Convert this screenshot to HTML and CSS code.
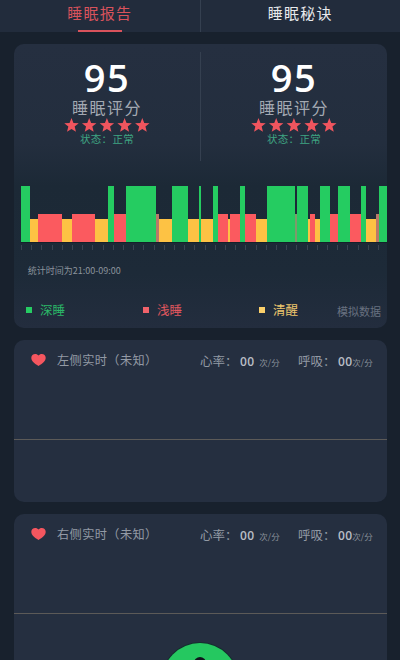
FILE: index.html
```html
<!DOCTYPE html>
<html lang="zh">
<head>
<meta charset="utf-8">
<title>睡眠报告</title>
<link rel="stylesheet" href="styles.css">
</head>
<body>
<div class="screen">
  <svg class="defs" width="0" height="0" aria-hidden="true"><defs>
    <polygon id="star" points="7.5,0 9.44,4.93 14.73,5.25 10.64,8.62 11.97,13.75 7.5,10.9 3.03,13.75 4.36,8.62 .27,5.25 5.56,4.93"/>
    <path id="heart" d="M12 20C5.500 15.800 0 12.500 0 6.300 0 2.700 2.900 0 6.500 0 8.800 0 10.800 1 12 2.700 13.200 1 15.200 0 17.500 0 21.100 0 24 2.700 24 6.300 24 12.500 18.500 15.800 12 20Z"/>
  </defs></svg>
  <nav class="tabs">
    <div class="tab active"><span>睡眠报告</span><i class="underline"></i></div>
    <div class="tab"><span>睡眠秘诀</span></div>
  </nav>
  <main class="content">
    <section class="card report">
      <div class="scores">
        <div class="score">
          <div class="num">95</div>
          <div class="lbl">睡眠评分</div>
          <svg class="stars" viewBox="0 0 86 14"><use href="#star"/><use href="#star" x="17.7"/><use href="#star" x="35.400"/><use href="#star" x="53.100"/><use href="#star" x="70.800"/></svg>
          <div class="state">状态：正常</div>
        </div>
        <div class="score">
          <div class="num">95</div>
          <div class="lbl">睡眠评分</div>
          <svg class="stars" viewBox="0 0 86 14"><use href="#star"/><use href="#star" x="17.7"/><use href="#star" x="35.400"/><use href="#star" x="53.100"/><use href="#star" x="70.800"/></svg>
          <div class="state">状态：正常</div>
        </div>
      </div>
      <div class="chart">
        <div class="bars">
          <b class="d" style="width:9.8px"></b><b class="a" style="width:8px"></b><b class="l" style="width:23.5px"></b><b class="a" style="width:10.5px"></b><b class="l" style="width:22.5px"></b><b class="a" style="width:13px"></b><b class="d" style="width:6.5px"></b><b class="l" style="width:11.5px"></b><b class="d" style="width:30px"></b><b class="mr" style="width:3px"></b><b class="a" style="width:13px"></b><b class="d" style="width:16px"></b><b class="a" style="width:11px"></b><b class="d" style="width:2px"></b><b class="a" style="width:12px"></b><b class="d" style="width:5.5px"></b><b class="l" style="width:9.5px"></b><b class="a" style="width:2px"></b><b class="l" style="width:10px"></b><b class="d" style="width:5px"></b><b class="l" style="width:11px"></b><b class="a" style="width:10.7px"></b><b class="d" style="width:28.8px"></b><b class="mg" style="width:1.5px"></b><b class="d" style="width:11px"></b><b class="a" style="width:2px"></b><b class="l" style="width:5px"></b><b class="a" style="width:5px"></b><b class="d" style="width:10px"></b><b class="l" style="width:8px"></b><b class="d" style="width:12px"></b><b class="l" style="width:11px"></b><b class="d" style="width:5px"></b><b class="a" style="width:10.5px"></b><b class="mr" style="width:3px"></b><b class="d" style="width:7.500px"></b>
        </div>
        <div class="ticks"></div>
        <div class="range">统计时间为21:00-09:00</div>
      </div>
      <div class="legend">
        <div class="lg deep"><i></i>深睡</div>
        <div class="lg light"><i></i>浅睡</div>
        <div class="lg awake"><i></i>清醒</div>
        <div class="mock">模拟数据</div>
      </div>
    </section>

    <section class="card live">
      <header class="live-head">
        <svg class="heart" viewBox="0 0 24 20"><use href="#heart"/></svg>
        <span class="side">左侧实时（未知）</span>
        <span class="metric"><span class="mlabel">心率：</span><em>00</em><small>次/分</small></span>
        <span class="metric second"><span class="mlabel">呼吸：</span><em>00</em><small>次/分</small></span>
      </header>
      <div class="axis"></div>
    </section>

    <section class="card live">
      <header class="live-head">
        <svg class="heart" viewBox="0 0 24 20"><use href="#heart"/></svg>
        <span class="side">右侧实时（未知）</span>
        <span class="metric"><span class="mlabel">心率：</span><em>00</em><small>次/分</small></span>
        <span class="metric second"><span class="mlabel">呼吸：</span><em>00</em><small>次/分</small></span>
      </header>
      <div class="axis"></div>
    </section>
  </main>
  <button class="fab" aria-label="开始"><i></i></button>
</div>
</body>
</html>
```
FILE: styles.css
```css
* { box-sizing: border-box; }
html, body { margin: 0; height: 100%; }
body { background: #18212d; font-family: "Noto Sans CJK SC", "Noto Sans", sans-serif; overflow: hidden; }
.defs { position: absolute; }
.screen { position: relative; width: 400px; height: 660px; overflow: hidden; background: #18212d; }
.tabs { display: flex; height: 32px; background: #222c3c; }
.tab { position: relative; flex: 1; display: flex; justify-content: center; padding-top: 1px; font-size: 15px; letter-spacing: 1.2px; line-height: 24px; color: #e8eaec; }
.tab + .tab { border-left: 1px solid #354050; }
.tab.active { color: #d9535c; }
.underline { position: absolute; left: 78px; bottom: 0; width: 44px; height: 2px; background: #d9535c; }
.content { display: flex; flex-direction: column; gap: 12px; padding: 12px 13px 0 14px; }
.card { border-radius: 10px; background: #252f40; }
.report { height: 284px; overflow: hidden; background: linear-gradient(#252f40 0, #232e3e 100px, #1c2936 142px, #1d2a38 230px, #232d3e 284px); }
.scores { display: flex; height: 117px; padding-top: 8px; }
.score { flex: 1; display: flex; flex-direction: column; align-items: center; padding-top: 6px; }
.score + .score { border-left: 1px solid #354050; }
.num { font-family: "Open Sans", sans-serif; font-weight: 600; font-size: 38px; line-height: 38px; color: #fff; letter-spacing: 1.5px; }
.lbl { margin-top: 1px; font-size: 16px; line-height: 20px; color: #a3a9b2; letter-spacing: 1.5px; }
.stars { display: block; width: 86px; height: 14px; margin-top: 1px; fill: #f0555e; }
.state { font-size: 10.500px; line-height: 13px; color: #3fa582; letter-spacing: .3px; }
.chart { padding: 25px 0 0 6.7px; }
.bars { display: flex; align-items: flex-end; height: 57px; border-bottom: 1px solid #14202a; }
.bars b { display: block; flex: none; }
.bars .d { height: 100%; background: #25cc61; }
.bars .l { height: 50%; background: #fb5a5f; }
.bars .a { height: 41%; background: #fdc244; }
.bars .mr { height: 50%; background: #b9796a; }
.bars .mg { height: 50%; background: #7f9a6b; }
.ticks { height: 5px; margin: 2px 6px 0 0; opacity: .45; background: repeating-linear-gradient(90deg, #5a6470 0 1px, transparent 1px 10.200px); }
.range { margin-top: 15px; padding-left: 7px; font-size: 9px; line-height: 12px; color: #8b939c; }
.legend { display: flex; align-items: center; margin-top: 24px; padding-left: 12px; font-size: 12.500px; line-height: 16px; }
.lg { display: flex; align-items: center; gap: 8px; flex: none; }
.lg i { width: 6px; height: 6px; }
.deep { color: #2bb868; width: 117px; } .deep i { background: #26cc63; }
.light { color: #e2585f; width: 116px; } .light i { background: #f0626a; }
.awake { color: #eec76d; width: 78px; } .awake i { background: #fbd06a; }
.mock { margin-top: 2px; font-size: 11px; color: #687180; white-space: nowrap; flex: none; }
.live { position: relative; height: 162px; padding: 13px 14px 0 17px; }
.live-head { display: flex; align-items: center; height: 14px; color: #939aa5; white-space: nowrap; }
.heart { width: 15px; height: 12px; fill: #f5565f; flex: none; }
.side { margin-left: 11px; font-size: 12.200px; letter-spacing: .4px; width: 143px; flex: none; }
.metric { display: flex; align-items: baseline; width: 98px; flex: none; }
.mlabel { font-size: 12.500px; width: 40px; flex: none; }
.metric em { font-style: normal; font-family: "Open Sans", sans-serif; font-weight: 600; color: #b9bec6; font-size: 12px; letter-spacing: .3px; }
.metric small { font-size: 8.500px; margin-left: 5px; color: #8a919b; }
.metric.second small { margin-left: 0; }
.axis { position: absolute; left: 0; right: 0; top: 99px; height: 1px; background: #5c5a58; }
.fab { position: absolute; left: 162px; top: 643px; width: 76px; height: 76px; padding: 0; border: 0; border-radius: 50%; background: #25c860; box-shadow: 0 0 0 1px #14302e; }
.fab i { position: absolute; left: 32px; top: 14px; width: 12px; height: 12px; border-radius: 50%; background: #10161c; }
```
